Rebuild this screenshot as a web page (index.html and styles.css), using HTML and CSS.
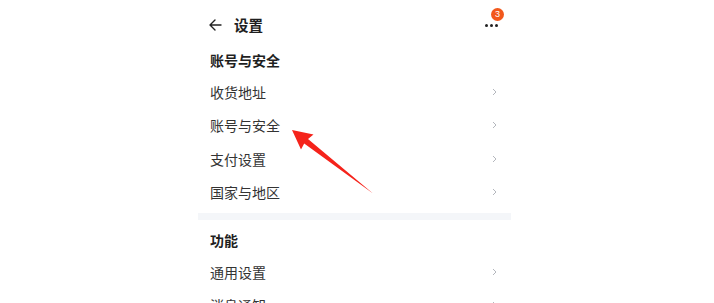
FILE: index.html
```html
<!DOCTYPE html>
<html lang="zh-CN">
<head>
<meta charset="utf-8">
<title>设置</title>
<link rel="stylesheet" href="styles.css">
</head>
<body>
<div class="page">
  <div class="topbar">
    <div class="title-group">
      <svg class="back" width="13" height="12" viewBox="0 0 13 12"><path d="M12 6H1.5M6 1L1 6l5 5" fill="none" stroke="#222" stroke-width="1.4" stroke-linecap="round" stroke-linejoin="round"/></svg>
      <span class="title">设置</span>
    </div>
    <div class="more">
      <span class="dots"><i></i><i></i><i></i></span>
      <span class="badge">3</span>
    </div>
  </div>

  <div class="section-title">账号与安全</div>
  <div class="row"><span>收货地址</span><svg class="chev" width="5" height="8" viewBox="0 0 5 8"><path d="M1 1l3 3-3 3" fill="none" stroke="#b4b7bd" stroke-width="1"/></svg></div>
  <div class="row"><span>账号与安全</span><svg class="chev" width="5" height="8" viewBox="0 0 5 8"><path d="M1 1l3 3-3 3" fill="none" stroke="#b4b7bd" stroke-width="1"/></svg></div>
  <div class="row"><span>支付设置</span><svg class="chev" width="5" height="8" viewBox="0 0 5 8"><path d="M1 1l3 3-3 3" fill="none" stroke="#b4b7bd" stroke-width="1"/></svg></div>
  <div class="row"><span>国家与地区</span><svg class="chev" width="5" height="8" viewBox="0 0 5 8"><path d="M1 1l3 3-3 3" fill="none" stroke="#b4b7bd" stroke-width="1"/></svg></div>

  <div class="divider"></div>

  <div class="section-title second">功能</div>
  <div class="row"><span>通用设置</span><svg class="chev" width="5" height="8" viewBox="0 0 5 8"><path d="M1 1l3 3-3 3" fill="none" stroke="#b4b7bd" stroke-width="1"/></svg></div>
  <div class="row"><span>消息通知</span><svg class="chev" width="5" height="8" viewBox="0 0 5 8"><path d="M1 1l3 3-3 3" fill="none" stroke="#b4b7bd" stroke-width="1"/></svg></div>
</div>

<svg class="annotation" width="714" height="303" viewBox="0 0 714 303">
  <polygon points="292,130 313.5,134.5 308,139 373,193.5 304.2,143.6 301,149.5" fill="#f5231b"/>
</svg>
</body>
</html>
```

FILE: styles.css
```css
* { box-sizing: border-box; }
html, body { margin: 0; padding: 0; background: #fff; }
body {
  width: 714px;
  height: 303px;
  overflow: hidden;
  position: relative;
  font-family: "Noto Sans CJK SC", "Noto Sans", sans-serif;
  color: #222;
}
.page {
  width: 313px;
  margin-left: 198px;
}
.topbar {
  height: 50px;
  display: flex;
  align-items: center;
  justify-content: space-between;
  padding: 0 13px 0 11px;
}
.title-group {
  display: flex;
  align-items: center;
  gap: 12px;
}
.back { display: block; }
.title {
  font-size: 14.5px;
  font-weight: 700;
  line-height: 20px;
  color: #1f1f1f;
}
.more {
  position: relative;
  width: 13px;
  height: 20px;
  display: flex;
  align-items: center;
}
.dots {
  display: flex;
  gap: 2px;
}
.dots i {
  width: 3px;
  height: 3px;
  border-radius: 50%;
  background: #222;
  display: block;
}
.badge {
  position: absolute;
  left: 6px;
  top: -7px;
  width: 13px;
  height: 13px;
  border-radius: 50%;
  background: #f2581c;
  color: #fff;
  font-family: "Liberation Sans", sans-serif;
  font-size: 9px;
  line-height: 13px;
  text-align: center;
}
.section-title {
  height: 20px;
  line-height: 20px;
  padding-left: 12px;
  font-size: 14px;
  font-weight: 700;
  color: #1f1f1f;
  margin-bottom: 5px;
}
.section-title.second { margin-top: 10px; }
.row {
  height: 33.5px;
  display: flex;
  align-items: center;
  justify-content: space-between;
  padding: 0 14px 0 12px;
  font-size: 14px;
  color: #333;
}
.chev { display: block; }
.divider {
  height: 7px;
  background: #f4f6f9;
  margin-top: 4px;
}
.annotation {
  position: absolute;
  left: 0;
  top: 0;
  pointer-events: none;
}
```
